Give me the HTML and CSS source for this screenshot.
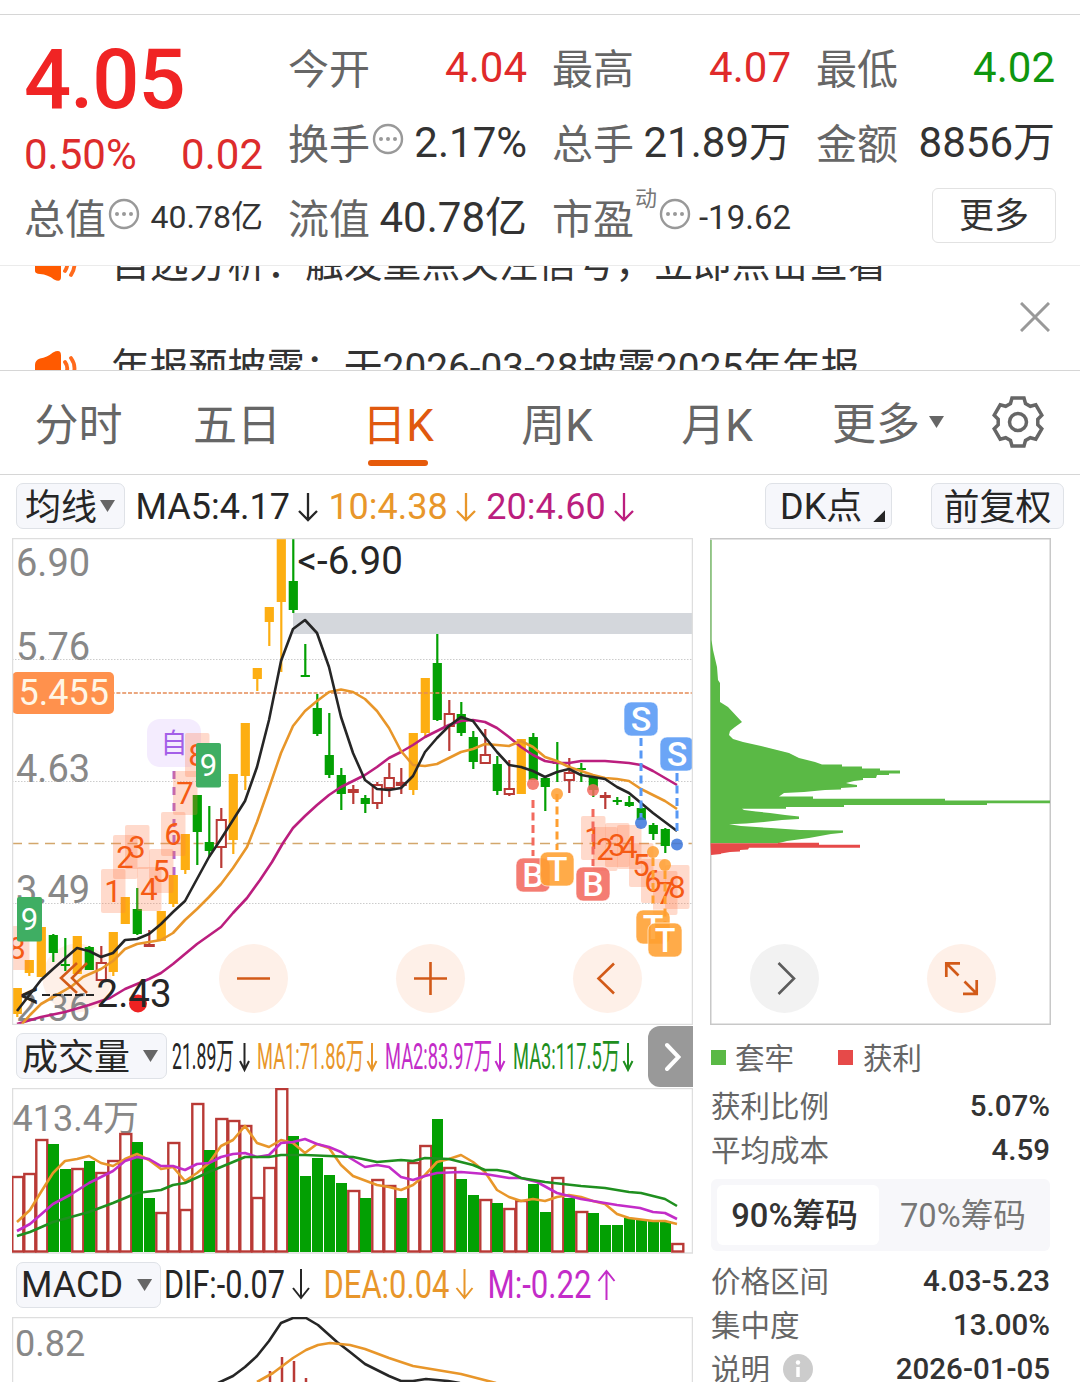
FILE: index.html
```html
<!DOCTYPE html>
<html lang="zh-CN">
<head>
<meta charset="utf-8">
<title>日K</title>
<link rel="stylesheet" href="styles.css">
</head>
<body>
<svg class="defs">
	<symbol id="dots" viewBox="0 0 32 32">
		<circle cx="16" cy="16" r="14" fill="none" stroke="#999" stroke-width="2.4"/>
		<g fill="#999"><circle cx="9" cy="16" r="2"/><circle cx="16" cy="16" r="2"/><circle cx="23" cy="16" r="2"/></g>
	</symbol>
	<symbol id="down" viewBox="0 0 20 30">
		<path d="M10 1V28M1 19L10 28L19 19" fill="none" stroke="currentColor" stroke-width="2.3"/>
	</symbol>
	<symbol id="horn" viewBox="0 0 46 34">
		<path d="M1 24V14q0-5 5-6.500q7-1 13-6q8-4 8 3V30q0 6-7 2.500q-6-5-14-5.500q-5-.5-5-3z" fill="#ff5a00"/>
		<path d="M31 11q4.500 6 0 13M37 7q7 10 0 21" fill="none" stroke="#ff6a1c" stroke-width="3.800" stroke-linecap="round"/>
	</symbol>
</svg>

<div class="quote">
	<div class="col">
		<div class="price">4.05</div>
		<div class="change"><span>0.50%</span><span>0.02</span></div>
		<div class="cell"><label>总值</label><svg class="dots"><use href="#dots"/></svg><b class="small">40.78亿</b></div>
	</div>
	<div class="col">
		<div class="cell"><label>今开</label><b class="red">4.04</b></div>
		<div class="cell"><label>换手</label><svg class="dots"><use href="#dots"/></svg><b>2.17%</b></div>
		<div class="cell"><label>流值</label><b>40.78亿</b></div>
	</div>
	<div class="col">
		<div class="cell"><label>最高</label><b class="red">4.07</b></div>
		<div class="cell"><label>总手</label><b>21.89万</b></div>
		<div class="cell"><label>市盈</label><sup>动</sup><svg class="dots"><use href="#dots"/></svg><b class="small pe">-19.62</b></div>
	</div>
	<div class="col">
		<div class="cell"><label>最低</label><b class="green">4.02</b></div>
		<div class="cell"><label>金额</label><b>8856万</b></div>
		<div class="cell"><button class="more">更多</button></div>
	</div>
</div>

<div class="notice">
	<div class="notice-list">
		<div class="notice-row"><svg class="horn"><use href="#horn"/></svg><span>自选分析：触发重点关注信号，立即点击查看</span></div>
		<div class="notice-row"><svg class="horn"><use href="#horn"/></svg><span>年报预披露：于2026-03-28披露2025年年报</span></div>
	</div>
	<svg class="close" viewBox="0 0 30 30"><path d="M1 1L29 29M29 1L1 29" stroke="#999" stroke-width="3"/></svg>
</div>

<div class="tabs">
	<div class="tab">分时</div>
	<div class="tab">五日</div>
	<div class="tab active">日K</div>
	<div class="tab">周K</div>
	<div class="tab">月K</div>
	<div class="tab tab-more">更多<i class="tri"></i></div>
	<svg class="gear" viewBox="-27 -27 54 54">
		<path d="M-6-24H6L7.500-18.500L12.300-15.750L17.800-17.200L23.800-6.800L19.800-2.750V2.750L23.800 6.800L17.800 17.200L12.300 15.750L7.500 18.500L6 24H-6L-7.500 18.500L-12.300 15.750L-17.800 17.200L-23.800 6.800L-19.800 2.750V-2.750L-23.800-6.800L-17.800-17.200L-12.300-15.750L-7.500-18.500Z"/>
		<circle r="8.500"/>
	</svg>
</div>

<div class="ma-row">
	<button class="btn btn-ma">均线<i class="tri"></i></button>
	<div class="ma">MA5:4.17<svg class="arrow"><use href="#down"/></svg></div>
	<div class="ma orange">10:4.38<svg class="arrow"><use href="#down"/></svg></div>
	<div class="ma magenta">20:4.60<svg class="arrow"><use href="#down"/></svg></div>
	<button class="btn btn-dk">DK点<i class="corner"></i></button>
	<button class="btn btn-fq">前复权</button>
</div>

<div class="main">
	<div class="left">
		<svg class="kline" viewBox="12 538 681 487">
			<rect x="293" y="613" width="400" height="21" fill="#d4d7dc"/>
			<path d="M12 659.500H693M12 781.500H693M12 903.500H693" stroke="#ccc" stroke-width="1" stroke-dasharray="1.500 1.500"/>
			<path d="M12 843.500H693" stroke="#d3a76c" stroke-width="1.300" stroke-dasharray="10 6.500"/>
			<circle cx="77" cy="978" r="34.500" fill="#fef0e8"/>
			<g class="axis">
				<text x="16" y="576">6.90</text>
				<text x="16" y="660">5.76</text>
				<text x="16" y="782">4.63</text>
				<text x="16" y="902.500">3.49</text>
				<text x="16" y="1021">2.36</text>
			</g>
			<g id="candles"></g>
			<path d="M12 693H693" stroke="#e58a55" stroke-width="1.400" stroke-dasharray="4 1.800"/>
			<rect x="12" y="672" width="102" height="42" rx="5" fill="#ff914d"/>
			<text x="18.500" y="705" font-size="36" fill="#fff6e6">5.455</text>

			<rect x="147" y="719" width="54" height="48" rx="13" fill="#f4ecfe"/>
			<text x="160.500" y="753" font-size="27" fill="#a35fe8">自</text>
			<path d="M174 771V876" stroke="#b265d0" stroke-width="3" stroke-dasharray="8 8"/>

			<g fill="none" stroke-width="2.600" stroke-linejoin="round">
				<polyline stroke="#bb1e7e" points="17,1024 41,1017 65,1012 89,1005 110,998 125,989 149,979 161,973 173,964 197,944 221,927 233,913 247,898 260,880 272,862 283,843 293,828 305,816 317,805 329,795 341,787 353,781 365,775 377,767 389,758 401,752 413,745 425,737 437,731 449,725 461,721 473,720 485,722 497,728 509,737 521,747 533,755 545,761 557,763 569,763 581,761 605,761 629,763 641,765 653,771 665,778 677,785"/>
				<polyline stroke="#e8962a" points="22,1024 30,1015 41,1004 55,996 72,986 83,977 101,969 113,961 125,949 137,944 149,942 161,940 173,933 185,920 197,909 209,897 221,884 233,868 247,847 257,822 269,788 281,753 293,726 305,711 317,701 329,692 341,689.500 353,692 365,699 377,711 389,728 401,751 413,765 425,766 437,764 449,758 461,752 473,749 485,744 497,745 509,746 521,741 533,747 545,757 557,761 569,767 581,771 593,775 605,778 617,779 629,781 641,789 653,795 665,801 677,809"/>
				<polyline stroke="#262626" points="17,1011 41,980 53,969 77,948 89,951 101,957 113,953 125,940 137,939 149,934 161,924 173,912 185,901 197,879 209,857 221,839 233,820 245,801 257,767 269,720 281,661 293,629 305,620 317,633 329,667 341,717 353,753 365,780 377,789 389,790 401,788 413,776 425,752 437,738 449,726 461,717 473,721 485,737 497,752 509,765 521,767 533,771 545,777 557,772 569,769 581,775 593,777 605,779 617,787 629,793 641,803 653,813 665,822 677,831"/>
			</g>
			<g id="counts"></g>
			<g id="signals"></g>

			<circle cx="138" cy="1003.500" r="9" fill="#ee2222"/>
			<path d="M42 995H95" stroke="#262626" stroke-width="1.800" stroke-dasharray="8 3"/>
			<g font-size="38.500" fill="#262626">
				<text x="297.500" y="573.500">&lt;-6.90</text>
				<text x="20" y="1008">&lt;</text>
				<text x="96.500" y="1007">2.43</text>
			</g>
			<g fill="#fef0e8">
				<circle cx="253.500" cy="978.500" r="34.500"/>
				<circle cx="430.500" cy="978.500" r="34.500"/>
				<circle cx="607.500" cy="978.500" r="34.500"/>
			</g>
			<g fill="none" stroke="#d25a18" stroke-width="2.600">
				<path d="M77 963L61 978L77 993M87 963L72 978L87 993"/>
				<path d="M237 978.500H270M414 978.500H447M430.500 962V995"/>
				<path d="M614 963.500L598.500 978.500L614 993.500"/>
			</g>
			<rect x="12.500" y="538.500" width="680" height="486" fill="none" stroke="#dedede" stroke-width="1.500"/>
		</svg>

		<div class="ind-row">
			<button class="btn btn-vol">成交量<i class="tri"></i></button>
			<svg class="ind" viewBox="167 1025 481 63" font-size="36">
				<g fill="#262626" color="#262626"><text x="172" y="1069" textLength="62" lengthAdjust="spacingAndGlyphs">21.89万</text><path d="M244.500 1043V1070M240 1061L244.500 1070L249 1061"/></g>
				<g fill="#e8962a" color="#e8962a"><text x="257" y="1069" textLength="107" lengthAdjust="spacingAndGlyphs">MA1:71.86万</text><path d="M372 1043V1070M367.500 1061L372 1070L376.500 1061"/></g>
				<g fill="#c32cc8" color="#c32cc8"><text x="385" y="1069" textLength="107" lengthAdjust="spacingAndGlyphs">MA2:83.97万</text><path d="M500 1043V1070M495.500 1061L500 1070L504.500 1061"/></g>
				<g fill="#1f8f1f" color="#1f8f1f"><text x="513" y="1069" textLength="107" lengthAdjust="spacingAndGlyphs">MA3:117.5万</text><path d="M628 1043V1070M623.500 1061L628 1070L632.500 1061"/></g>
			</svg>
			<div class="next"><svg viewBox="0 0 16 30"><path d="M2 3L13.500 15L2 27" fill="none" stroke="#fff" stroke-width="4" stroke-linecap="round"/></svg></div>
		</div>

		<svg class="volume" viewBox="12 1088 681 166">
			<rect x="12.500" y="1088.500" width="680" height="164.500" fill="none" stroke="#dedede" stroke-width="1.500"/>
			<text x="12.500" y="1131" font-size="36" fill="#888">413.4万</text>
			<g id="bars"></g>
			<g fill="none" stroke-width="2.600" stroke-linejoin="round">
				<polyline stroke="#e8962a" points="17,1222 30,1210 41,1192 53,1173 65,1161 77,1159 89,1156 101,1163 113,1166 125,1159 137,1154 149,1160 161,1169 173,1167 185,1181 197,1173 209,1163 221,1146 233,1140 245,1126 257,1143 269,1147 281,1140 293,1143 305,1153 317,1144 329,1148 341,1165 353,1176 377,1185 389,1187 401,1190 413,1185 425,1175 437,1162 449,1159 461,1155 473,1162 485,1172 497,1190 509,1197 521,1201 533,1199 545,1201 557,1197 569,1195 581,1197 593,1201 605,1204 617,1214 629,1218 653,1221 665,1221 677,1224"/>
				<polyline stroke="#c32cc8" points="17,1231 30,1224 53,1204 70,1195 89,1183 113,1171 125,1161 137,1157 149,1159 161,1166 173,1166 185,1170 197,1164 209,1163 221,1157 233,1154 245,1153 257,1157 269,1155 281,1143 293,1142 305,1139 317,1144 329,1147 341,1152 350,1158 365,1167 377,1165 389,1167 401,1177 413,1180 425,1176 437,1173 461,1172 485,1174 509,1178 521,1178 537,1182 557,1193 581,1199 617,1205 640,1208 653,1212 665,1213 677,1219"/>
				<polyline stroke="#1f8f1f" points="17,1236 30,1232 53,1222 89,1212 113,1203 137,1193 161,1190 173,1185 185,1183 209,1172 245,1157 269,1157 281,1155 305,1155 353,1157 377,1162 401,1160 413,1161 425,1158 449,1159 473,1165 485,1170 497,1170 509,1172 521,1178 545,1182 581,1186 605,1188 629,1192 641,1193 653,1196 665,1199 677,1206"/>
			</g>
		</svg>

		<div class="ind-row">
			<button class="btn btn-macd">MACD<i class="tri"></i></button>
			<svg class="ind" viewBox="161 1254 532 63" font-size="38">
				<g fill="#262626" color="#262626"><text x="164" y="1298" textLength="121" lengthAdjust="spacingAndGlyphs">DIF:-0.07</text><path d="M301 1269V1298M293 1288L301 1298L309 1288"/></g>
				<g fill="#e8962a" color="#e8962a"><text x="323.500" y="1298" textLength="126" lengthAdjust="spacingAndGlyphs">DEA:0.04</text><path d="M464.500 1269V1298M456.500 1288L464.500 1298L472.500 1288"/></g>
				<g fill="#c32cc8" color="#c32cc8"><text x="487.500" y="1298" textLength="104" lengthAdjust="spacingAndGlyphs">M:-0.22</text><path d="M606.500 1300V1271M598.500 1281L606.500 1271L614.500 1281"/></g>
			</svg>
		</div>

		<svg class="macd" viewBox="12 1317 681 65">
			<path d="M12.500 1382V1317.500H692.500V1382" fill="none" stroke="#dedede" stroke-width="1.500"/>
			<text x="15" y="1356" font-size="36" fill="#888">0.82</text>
			<path d="M270 1371V1382M282 1357V1382M294 1361V1382M306 1378V1382" stroke="#b93a36" stroke-width="2.500"/>
			<g fill="none" stroke-width="2.600" stroke-linejoin="round">
				<polyline stroke="#262626" points="218,1383 233,1376 245,1367 257,1356 269,1341 281,1323 293,1318 306,1318 318,1325 337,1342 350,1352 365,1364 389,1376 401,1381 413,1381 426,1379 448,1381 460,1383"/>
				<polyline stroke="#e8962a" points="257,1382 273,1373 293,1358 306,1350 318,1345 330,1343 350,1345 365,1349 389,1358 413,1366 437,1370 461,1374 496,1383"/>
			</g>
		</svg>
	</div>

	<div class="right">
		<svg class="chips" viewBox="710 538 341 487">
			<rect x="710.750" y="538.750" width="339.500" height="485.500" fill="none" stroke="#c8c8c8" stroke-width="1.500"/>
			<path fill="#5ab945" d="M710.500 540H711.500V640L713 650L717 667L718 680L720 683V702L728 707L742 722L735 727L730 731L729 735L733 739L743 742L761 746L777 750L789 753L799 758L815 762L822 764.500H842V766.500H862V768.500H880V770.500H900V773.500H889V775H877L876 778H863V780L854 781L846 783L850 784L857 785V787L841 788V789.500L825 790L804 792L784 793L779 796.500H813V798.700H945V800.500H1050V803.200H987V805H844V807H786V808.700H742L744 810L756 811.500L770 813L785 815L799 816.500V819L782 820L764 822L746 823.500L729 824.300L741 826L771 828L800 830L843 830.500V832.700L831 834L820 836L809 838L798 839.500L787 841L778 843.300H710.500Z"/>
			<path fill="#e64a49" d="M710.500 843.300H778V842.700H819V844.700H860V847.700H749L748 849.500L740 850V851.500L730 852L721 853.500V854L711 855Z"/>
			<circle cx="784.500" cy="978.500" r="34.500" fill="#f2f2f2"/>
			<path d="M778.500 963L794 978.500L778.500 994" fill="none" stroke="#5c5c5c" stroke-width="2.600"/>
			<circle cx="961.500" cy="978.500" r="34.500" fill="#fef0e8"/>
			<path d="M960 963.300H946.300V977M947 964L958.500 975.500M963 993.800H976.700V980M976 993L964.500 981.500" fill="none" stroke="#d25a18" stroke-width="2.700"/>
		</svg>
		<div class="legend"><i class="sq sq-green"></i><span>套牢</span><i class="sq sq-red"></i><span>获利</span></div>
		<div class="row"><span>获利比例</span><b>5.07%</b></div>
		<div class="row"><span>平均成本</span><b>4.59</b></div>
		<div class="switch"><div class="on">90%筹码</div><div>70%筹码</div></div>
		<div class="row"><span>价格区间</span><b>4.03-5.23</b></div>
		<div class="row"><span>集中度</span><b>13.00%</b></div>
		<div class="row"><span>说明</span><svg class="info" viewBox="0 0 30 30"><circle cx="15" cy="15" r="15" fill="#ccc"/><path d="M15 13V23" stroke="#fff" stroke-width="3.500"/><circle cx="15" cy="8.500" r="2.200" fill="#fff"/></svg><b>2026-01-05</b></div>
	</div>
</div>
<script src="chart.js"></script>
</body>
</html>
```

FILE: styles.css
```css
* {
  box-sizing: border-box;
}
body {
  margin: 0;
  width: 1080px;
  height: 1382px;
  padding-top: 14px;
  overflow: hidden;
  background: #fff;
  color: #333;
  font-family: Roboto, "Noto Sans CJK SC", sans-serif;
}
svg {
  display: block;
  flex: none;
}
svg text {
  font-family: Roboto, "Noto Sans CJK SC", sans-serif;
}
b {
  font-weight: 400;
}
button {
  font-family: inherit;
  padding: 0;
  color: #262626;
}
.defs {
  position: absolute;
  width: 0;
  height: 0;
}
.red { color: #e02a2a; }
.green { color: #0f960f; }
.orange { color: #e8962a; }
.magenta { color: #bb1e7e; }

/* quote header */
.quote {
  display: grid;
  grid-template-columns: repeat(4, 238px);
  column-gap: 26px;
  height: 252px;
  padding: 15px 25px 0;
  border-top: 1px solid #d6d6d6;
  border-bottom: 1px solid #ebebeb;
}
.price {
  font-size: 83px;
  line-height: 99px;
  height: 100px;
  font-weight: 500;
  letter-spacing: -1px;
  color: #f02424;
  margin-left: -1px;
}
.change {
  display: flex;
  justify-content: space-between;
  font-size: 42px;
  line-height: 50px;
  color: #dd2c2c;
  margin-left: -1px;
}
.cell {
  display: flex;
  align-items: center;
  height: 75px;
  line-height: 75px;
  white-space: nowrap;
}
.cell label {
  font-size: 41px;
  color: #666;
  margin-left: -1px;
  padding-top: 5px;
}
.cell b {
  margin-left: auto;
  font-size: 42px;
}
.cell b.small {
  font-size: 32px;
}
.cell b.pe {
  font-size: 33px;
}
.cell sup {
  font-size: 22px;
  line-height: 22px;
  color: #777;
  margin: -37px 0 0 1px;
}
.dots {
  width: 32px;
  height: 32px;
  margin: -8px 0 0 2px;
}
.more {
  width: 124px;
  height: 55px;
  margin-left: auto;
  margin-right: -1px;
  margin-top: -5px;
  padding-top: 3px;
  border: 1px solid #e2e2e2;
  border-radius: 6px;
  background: #fff;
  font-size: 35px;
  line-height: 50px;
  color: #333;
}

/* scrolling notices */
.notice {
  position: relative;
  height: 104px;
  overflow: hidden;
}
.notice-list {
  margin-top: -54px;
}
.notice-row {
  display: flex;
  align-items: center;
  height: 104px;
  padding-left: 34px;
  font-size: 38.8px;
  line-height: 104px;
  white-space: nowrap;
}
.horn {
  width: 46px;
  height: 34px;
  margin-right: 31px;
}
.close {
  position: absolute;
  left: 1020px;
  top: 36px;
  width: 30px;
  height: 30px;
}

/* period tabs */
.tabs {
  display: flex;
  height: 105px;
  padding-right: 34px;
  border-top: 1px solid #d6d6d6;
  border-bottom: 1px solid #d6d6d6;
  font-size: 44px;
  line-height: 110px;
  color: #666;
}
.tab {
  width: 160px;
  text-align: center;
}
.tab:first-child {
  width: 157px;
}
.tab.active {
  position: relative;
  left: 1px;
  color: #e0590f;
}
.tab.active::after {
  content: "";
  position: absolute;
  left: 50px;
  bottom: 8px;
  width: 60px;
  height: 6px;
  border-radius: 3px;
  background: #e65a0a;
}
.tab-more {
  display: flex;
  align-items: center;
  height: 108px;
  margin-left: 35px;
  width: 125px;
}
.tri {
  width: 15px;
  height: 12px;
  background: #666;
  clip-path: polygon(0 0, 100% 0, 50% 100%);
}
.tab-more .tri {
  margin: -6px 0 0 9px;
}
.gear {
  width: 54px;
  height: 54px;
  margin: 24px 0 0 34px;
  fill: none;
  stroke: #666;
  stroke-width: 3.5;
}

/* moving average row */
.ma-row {
  display: flex;
  height: 63px;
  padding: 8px 16px 0;
}
.btn {
  display: flex;
  align-items: center;
  flex: none;
  height: 46px;
  border: 1px solid #dfe2e7;
  border-radius: 7px;
  background: #f6f7fb;
  font-size: 36px;
  line-height: 46px;
}
.btn-ma {
  width: 109px;
  padding: 4px 0 0 8px;
  margin-right: 10.5px;
}
.btn-ma .tri {
  margin: -4px 0 0 3px;
}
.ma {
  display: flex;
  font-size: 36px;
  line-height: 48px;
  margin-right: 10.5px;
  color: #262626;
}
.ma.orange { color: #e8962a; }
.ma.magenta { color: #bb1e7e; }
.arrow {
  width: 20px;
  height: 30px;
  margin: 9px 0 0 8px;
}
.btn-dk {
  width: 127px;
  margin-left: auto;
  padding: 2px 0 0 14px;
}
.corner {
  width: 12px;
  height: 12px;
  margin: 18px 0 0 11px;
  background: #262626;
  clip-path: polygon(100% 0, 100% 100%, 0 100%);
}
.btn-fq {
  width: 133px;
  margin-left: 39px;
  padding-top: 4px;
  justify-content: center;
}

/* charts */
.main {
  display: grid;
  grid-template-columns: 681px 341px;
  column-gap: 17px;
  padding-left: 12px;
}
.kline, .chips {
  height: 487px;
  width: 100%;
}
.axis {
  font-size: 38px;
  fill: #888;
}
.ind-row {
  display: flex;
  height: 63px;
  padding-left: 4px;
}
.ind-row .btn {
  margin-top: 8px;
}
.btn-vol {
  width: 151px;
  padding: 4px 0 0 5px;
}
.btn-vol .tri {
  margin: -4px 0 0 13px;
}
.btn-macd {
  width: 145px;
  padding-left: 4px;
}
.btn-macd .tri {
  margin-left: 14px;
}
.ind {
  height: 63px;
}
.ind path {
  fill: none;
  stroke: currentColor;
  stroke-width: 2;
}
.next {
  display: flex;
  align-items: center;
  width: 45px;
  height: 61px;
  margin-top: 1px;
  padding-left: 17px;
  border-radius: 12px 0 0 12px;
  background: #999;
}
.next svg {
  width: 16px;
  height: 30px;
}
.volume {
  width: 681px;
  height: 166px;
}
.macd {
  width: 681px;
  height: 65px;
}
.num {
  font-size: 31px;
  text-anchor: middle;
}
.sig {
  font-size: 34px;
  font-weight: 500;
  text-anchor: middle;
  fill: #fff;
}

/* chip panel */
.legend {
  display: flex;
  align-items: center;
  height: 59px;
  padding: 6px 0 0 1px;
  font-size: 29.5px;
  line-height: 44px;
  color: #666;
}
.legend span, .row span {
  padding-top: 2px;
}
.sq {
  width: 15px;
  height: 15px;
  margin-right: 9px;
}
.sq-green { background: #5ab945; }
.sq-red {
  margin: 0 10px 0 44px;
  background: #e64a49;
}
.row {
  display: flex;
  align-items: center;
  height: 44px;
  padding: 0 1px;
  font-size: 29.5px;
  line-height: 44px;
  color: #666;
}
.row b {
  margin-left: auto;
  font-weight: 500;
  color: #333;
}
.info {
  width: 30px;
  height: 30px;
  margin-left: 13px;
}
.switch {
  display: flex;
  width: 339px;
  height: 72px;
  margin: 7px 0 8px 1px;
  padding: 6px;
  border-radius: 6px;
  background: #f7f7fa;
  font-size: 32.7px;
  line-height: 62px;
  color: #777;
  text-align: center;
}
.switch div {
  width: 164px;
  height: 60px;
}
.switch .on {
  padding-right: 7px;
  border-radius: 6px;
  background: #fff;
  font-weight: 500;
  color: #333;
}
.switch .on + div {
  margin-left: 3px;
}
```

FILE: chart.js
```js
var RED = '#b93a36', GREEN = '#03a003', YELLOW = '#fdae12';

// type, body top, body bottom, high, low  (y = limit-up/strong, g = down, r = up, f = flat red)
var candles = [
  ['y',988,1014,988,1017], ['y',960,973,960,976], ['y',927,977,927,977], ['g',935,953,934,962],
  ['g',964,966,938,971], ['y',936,974,936,974], ['g',947,970,946,970], ['r',962,981,946,981],
  ['y',932,972,932,976], ['y',897,924,897,924], ['g',909,934,888,935], ['f',944,947,930,945],
  ['y',911,941,911,941], ['y',875,904,875,907], ['y',834,870,834,874], ['g',795,832,795,865],
  ['g',842,851,806,857], ['r',819,848,808,868], ['y',774,840,774,854], ['y',723,776,723,790],
  ['y',668,679,668,691], ['y',607,622,607,646], ['y',539,602,539,672], ['g',581,610,538,613],
  ['g',675,677,644,676], ['g',708,734,694,736], ['g',755,775,713,778], ['g',775,794,768,810],
  ['f',789,793,785,804], ['g',798,804,795,813], ['r',784,804,782,809], ['r',777,789,763,797],
  ['f',782,786,768,794], ['y',733,790,733,795], ['y',678,733,678,738], ['g',663,720,634,721],
  ['r',713,727,700,751], ['g',714,733,702,736], ['g',737,762,731,769], ['r',754,764,729,764],
  ['g',764,791,756,795], ['r',788,795,760,796], ['y',739,794,739,794], ['g',737,780,733,780],
  ['g',778,787,776,811], ['g',762,764,742,782], ['r',772,781,758,793], ['g',768,770,763,782],
  ['g',777,790,777,797], ['f',795,798,792,809], ['g',800,802,797,805], ['g',802,806,796,807],
  ['g',808,820,805,820], ['g',825,834,823,840], ['g',829,846,828,853]
];

var volume = 'r1176 r1173 r1139 g1144 g1169 r1168 g1161 r1172 r1160 r1133 g1142 g1198 r1212 r1142 r1209 r1103 g1150 r1118 r1120 r1125 r1197 r1167 r1088 g1136 g1176 g1158 g1175 g1183 r1190 g1198 r1179 r1185 g1198 r1162 r1145 g1119 r1167 g1179 g1195 r1199 g1203 r1208 r1200 g1184 g1212 r1177 g1198 r1211 g1213 g1225 g1225 g1218 g1220 g1220 g1221 r1243'.split(' ');

// digit, left, top
var counts = [
  [8,5,926], [1,101,869], [2,113,835], [3,125,825], [4,137,867], [5,149,849], [6,161,812], [7,173,771], [8,185,733],
  [1,581,816], [2,593,827], [3,605,823], [4,617,825], [5,629,843], [6,641,859], [7,653,871], [8,665,865]
];
var nines = [[17,897], [196,743]];

// letter, colour, x, dot y, line from, line to, badge centre
var signals = [
  ['S','#5798f5',641,823,738,818,719], ['S','#5798f5',677,844.5,773,832,754],
  ['B','#f26a5e',533,784,800,856,875], ['T','#ff9f30',557,794,794,850,869],
  ['B','#f26a5e',593,790,809,866,884], ['T','#ff9f30',653,852,858,908,927], ['T','#ff9f30',665,865,871,922,940]
];

function put(id, html) {
  document.getElementById(id).innerHTML = html;
}

function drawCandles() {
  var s = '';
  candles.forEach(function (c, i) {
    var x = 17.3 + i * 12;
    var color = c[0] == 'y' ? YELLOW : c[0] == 'g' ? GREEN : RED;
    if (c[0] == 'r') {
      s += '<path d="M' + x + ' ' + c[3] + 'V' + c[1] + 'M' + x + ' ' + c[2] + 'V' + c[4] + '" stroke="' + color + '" stroke-width="2.2"/>';
      s += '<rect x="' + (x - 4.6) + '" y="' + (c[1] + 1) + '" width="9.2" height="' + (c[2] - c[1] - 2) + '" fill="#fff" stroke="' + color + '" stroke-width="2"/>';
    } else {
      var w = c[0] == 'f' ? 11 : 9.2;
      s += '<path d="M' + x + ' ' + c[3] + 'V' + c[4] + '" stroke="' + color + '" stroke-width="2.2"/>';
      s += '<rect x="' + (x - w / 2) + '" y="' + c[1] + '" width="' + w + '" height="' + (c[2] - c[1]) + '" fill="' + color + '"/>';
    }
  });
  put('candles', s);
}

function drawVolume() {
  var s = '';
  volume.forEach(function (v, i) {
    var x = 17.5 + i * 12, y = +v.slice(1);
    if (v[0] == 'g')
      s += '<rect x="' + (x - 5.5) + '" y="' + y + '" width="11" height="' + (1252 - y) + '" fill="' + GREEN + '"/>';
    else
      s += '<rect x="' + (x - 5.2) + '" y="' + (y + 1) + '" width="11" height="' + (1250.5 - y) + '" fill="#fff" stroke="' + RED + '" stroke-width="2.4"/>';
  });
  put('bars', s);
}

function drawCounts() {
  var s = '';
  counts.forEach(function (c) {
    s += '<rect x="' + c[1] + '" y="' + c[2] + '" width="24.500" height="44" rx="2" fill="#ff7841" fill-opacity=".27"/>';
  });
  counts.forEach(function (c) {
    s += '<text class="num" x="' + (c[1] + 12) + '" y="' + (c[2] + 33) + '" fill="#f55a14">' + c[0] + '</text>';
  });
  nines.forEach(function (n) {
    s += '<rect x="' + n[0] + '" y="' + n[1] + '" width="25" height="44.500" rx="2" fill="#3fae63"/>';
    s += '<text class="num" x="' + (n[0] + 12.5) + '" y="' + (n[1] + 33) + '" fill="#fff">9</text>';
  });
  put('counts', s);
}

function drawSignals() {
  var s = '';
  signals.forEach(function (g) {
    s += '<path d="M' + g[2] + ' ' + g[4] + 'V' + g[5] + '" stroke="' + g[1] + '" stroke-width="3" stroke-dasharray="8 4.500"/>';
    s += '<circle cx="' + g[2] + '" cy="' + g[3] + '" r="6" fill="' + (g[0] == 'S' ? '#3a76dc' : g[1]) + '" fill-opacity=".85"/>';
    s += '<rect x="' + (g[2] - 17) + '" y="' + (g[6] - 17) + '" width="34" height="34" rx="7" fill="' + g[1] + '" fill-opacity=".88" stroke="#fff" stroke-opacity=".6"/>';
    s += '<text class="sig" x="' + g[2] + '" y="' + (g[6] + 12) + '">' + g[0] + '</text>';
  });
  put('signals', s);
}

drawCandles();
drawVolume();
drawCounts();
drawSignals();
```
